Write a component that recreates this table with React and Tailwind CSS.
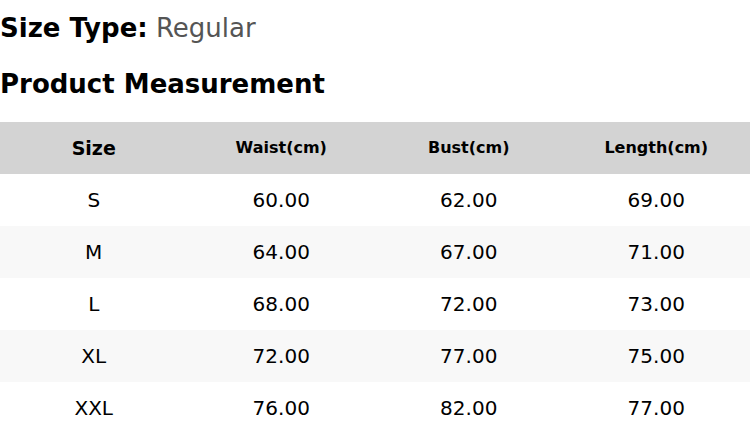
import React from "react";

const rows = [
  ["S", "60.00", "62.00", "69.00"],
  ["M", "64.00", "67.00", "71.00"],
  ["L", "68.00", "72.00", "73.00"],
  ["XL", "72.00", "77.00", "75.00"],
  ["XXL", "76.00", "82.00", "77.00"],
];

export default function App() {
  return (
    <div
      className="w-[750px] h-[434px] overflow-hidden bg-white text-black"
      style={{ fontFamily: '"DejaVu Sans", sans-serif' }}
    >
      <div className="pt-[8px] h-[48px] leading-[40px] text-[26px] whitespace-nowrap">
        <span className="font-bold">Size Type:</span>{" "}
        <span className="text-[#555555]">Regular</span>
      </div>
      <div className="mt-[16px] h-[40px] leading-[40px] text-[26px] font-bold whitespace-nowrap">
        Product Measurement
      </div>
      <div className="mt-[18px]">
        <div className="grid grid-cols-4 h-[52px] bg-[#d3d3d3] items-center text-center font-bold">
          <div className="text-[19px]">Size</div>
          <div className="text-[16px]">Waist(cm)</div>
          <div className="text-[16px]">Bust(cm)</div>
          <div className="text-[16px]">Length(cm)</div>
        </div>
        {rows.map((r, i) => (
          <div
            key={r[0]}
            className={
              "grid grid-cols-4 h-[52px] items-center text-center text-[20px] " +
              (i % 2 === 1 ? "bg-[#f8f8f8]" : "bg-white")
            }
          >
            {r.map((c, j) => (
              <div key={j}>{c}</div>
            ))}
          </div>
        ))}
      </div>
    </div>
  );
}
